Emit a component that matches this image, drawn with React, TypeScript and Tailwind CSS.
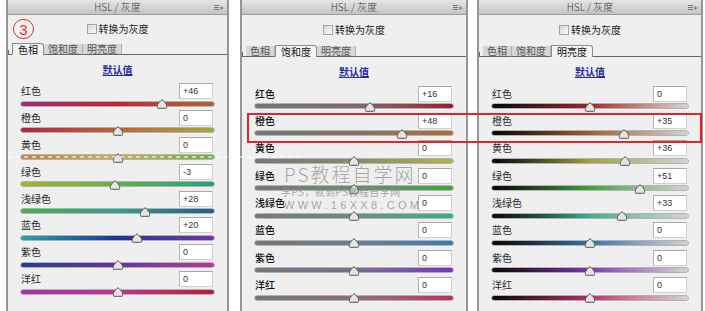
import React from "react";

type Row = { label: string; value: string; pos: number; track: string };

const hueRows: Row[] = [
  { label: "红色", value: "+46", pos: 46, track: "bg-linear-to-r from-[#9c2f78] via-[#c41f34] to-[#a8643c]" },
  { label: "橙色", value: "0", pos: 0, track: "bg-linear-to-r from-[#b21f42] via-[#c0622e] to-[#a4a640]" },
  { label: "黄色", value: "0", pos: 0, track: "bg-linear-to-r from-[#c48444] via-[#c4b252] to-[#6cb040]" },
  { label: "绿色", value: "-3", pos: -3, track: "bg-linear-to-r from-[#a8b230] via-[#5cb240] to-[#1ea084]" },
  { label: "浅绿色", value: "+28", pos: 28, track: "bg-linear-to-r from-[#44b040] via-[#2ea292] to-[#1f5f8a]" },
  { label: "蓝色", value: "+20", pos: 20, track: "bg-linear-to-r from-[#2ea2a2] via-[#1f3494] to-[#7232a6]" },
  { label: "紫色", value: "0", pos: 0, track: "bg-linear-to-r from-[#1f3a9c] via-[#6430b0] to-[#c03290]" },
  { label: "洋红", value: "0", pos: 0, track: "bg-linear-to-r from-[#a032b0] via-[#c03290] to-[#b01f3a]" },
];

const satRows: Row[] = [
  { label: "红色", value: "+16", pos: 16, track: "bg-linear-to-r from-[#767676] via-[#7e6a6c] to-[#9c1030]" },
  { label: "橙色", value: "+48", pos: 48, track: "bg-linear-to-r from-[#767676] via-[#807468] to-[#b06c30]" },
  { label: "黄色", value: "0", pos: 0, track: "bg-linear-to-r from-[#767676] via-[#8a8a6a] to-[#b4b440]" },
  { label: "绿色", value: "0", pos: 0, track: "bg-linear-to-r from-[#767676] via-[#6c8a6c] to-[#3ca63c]" },
  { label: "浅绿色", value: "0", pos: 0, track: "bg-linear-to-r from-[#767676] via-[#6a8c84] to-[#2cb08e]" },
  { label: "蓝色", value: "0", pos: 0, track: "bg-linear-to-r from-[#767676] via-[#6c7c8e] to-[#2e7ec4]" },
  { label: "紫色", value: "0", pos: 0, track: "bg-linear-to-r from-[#767676] via-[#7a6c8e] to-[#7a2ec4]" },
  { label: "洋红", value: "0", pos: 0, track: "bg-linear-to-r from-[#767676] via-[#8a6c7e] to-[#c42266]" },
];

const lumRows: Row[] = [
  { label: "红色", value: "0", pos: 0, track: "bg-linear-to-r from-[#080808] via-[#a6202e] to-[#d2d2d2]" },
  { label: "橙色", value: "+35", pos: 35, track: "bg-linear-to-r from-[#080808] via-[#a2602e] to-[#d2d2d2]" },
  { label: "黄色", value: "+36", pos: 36, track: "bg-linear-to-r from-[#080808] via-[#a4a232] to-[#d2d2d2]" },
  { label: "绿色", value: "+51", pos: 51, track: "bg-linear-to-r from-[#080808] via-[#3ca43c] to-[#d2d2d2]" },
  { label: "浅绿色", value: "+33", pos: 33, track: "bg-linear-to-r from-[#080808] via-[#30b092] to-[#d2d2d2]" },
  { label: "蓝色", value: "0", pos: 0, track: "bg-linear-to-r from-[#080808] via-[#3474b2] to-[#d2d2d2]" },
  { label: "紫色", value: "0", pos: 0, track: "bg-linear-to-r from-[#080808] via-[#8432b4] to-[#d2d2d2]" },
  { label: "洋红", value: "0", pos: 0, track: "bg-linear-to-r from-[#080808] via-[#c42272] to-[#d2d2d2]" },
];

function Thumb({ pos }: { pos: number }) {
  return (
    <svg
      width="11"
      height="10"
      viewBox="0 0 11 10"
      className="absolute top-0 -translate-x-1/2"
      style={{ left: `${50 + pos / 2}%` }}
    >
      <path
        d="M5.5 0.8 C6.2 0.8 10.2 5 10.2 6.4 L10.2 8.5 C10.2 9 9.8 9.3 9.3 9.3 L1.7 9.3 C1.2 9.3 0.8 9 0.8 8.5 L0.8 6.4 C0.8 5 4.8 0.8 5.5 0.8 Z"
        fill="#e4e4e4"
        stroke="#555"
        strokeWidth="1"
      />
    </svg>
  );
}

function TitleBar() {
  return (
    <div className="relative h-[15px] shrink-0 flex items-center justify-center bg-linear-to-b from-[#e6e6e6] to-[#c4c4c4] border-b border-[#9c9c9c] text-[10px] leading-none text-[#3a3a3a] font-light">
      HSL / 灰度
      <svg width="10" height="6" viewBox="0 0 10 6" className="absolute right-[3px] top-[5px]">
        <path d="M0 0.5h5M0 2.5h5M0 4.5h5" stroke="#777" strokeWidth="1" />
        <path d="M6.5 1 L9.5 3 L6.5 5 Z" fill="#777" />
      </svg>
    </div>
  );
}

function Tabs({ active }: { active: number }) {
  const names = ["色相", "饱和度", "明亮度"];
  return (
    <div className="h-[12px] shrink-0 flex items-end">
      <div className="w-[4px] h-[5px] border-b border-l border-[#666]" />
      {names.map((t, i) =>
        i === active ? (
          <div
            key={t}
            className="h-[12px] px-[5px] bg-[#f3f3f3] border-t border-x border-[#8e8e8e] rounded-tr-[3px] text-[10px] leading-[11px] text-[#111]"
          >
            {t}
          </div>
        ) : (
          <div
            key={t}
            className="h-[11px] px-[4px] bg-[#d6d6d6] border-b border-r border-[#666] border-r-[#b0b0b0] text-[10px] leading-[10px] text-[#555]"
          >
            {t}
          </div>
        )
      )}
      <div className="flex-1 border-b border-[#666]" />
    </div>
  );
}

function Panel({
  className,
  rows,
  active,
  rowH,
  checkH,
  linkH,
  bold,
}: {
  className: string;
  rows: Row[];
  active: number;
  rowH: string;
  checkH: string;
  linkH: string;
  bold?: boolean;
}) {
  return (
    <div className={`${className} h-[311px] shrink-0 flex flex-col bg-[#efefef] border-x-2 border-[#969696]`}>
      <TitleBar />
      <div className={`${checkH} shrink-0 flex items-center justify-center gap-[2px]`}>
        <span className="w-[10px] h-[10px] border border-[#a4a4a4] bg-linear-to-br from-[#d8d8d8] to-[#fafafa]" />
        <span className="text-[10px] leading-none text-[#1a1a1a]">转换为灰度</span>
      </div>
      <Tabs active={active} />
      <div className={`${linkH} shrink-0 flex justify-center pt-[10px]`}>
        <span className="text-[10px] leading-none font-bold text-[#2b2b9c] underline underline-offset-1">默认值</span>
      </div>
      {rows.map((r) => (
        <div key={r.label} className={`${rowH} shrink-0 px-[13px]`}>
          <div className="mt-[3px] h-[16px] flex items-center justify-between">
            <span className={`text-[10px] leading-none ${bold ? "font-medium text-[#111]" : "text-[#2a2a2a]"}`}>
              {r.label}
            </span>
            <span className="mr-[1px] w-[34px] h-[16px] bg-white border border-[#cfcfcf] border-t-[#a8a8a8] border-l-[#b4b4b4] pl-[3px] text-[9px] leading-[14px] text-[#333] font-['Liberation_Sans',sans-serif]">
              {r.value}
            </span>
          </div>
          <div className="relative h-[9px] flex items-center">
            <div className={`w-full h-[4px] rounded-full ${r.track} shadow-[0_0_0_0.5px_rgba(40,40,40,0.6)]`} />
            <Thumb pos={r.pos} />
          </div>
        </div>
      ))}
    </div>
  );
}

export default function App() {
  return (
    <div className="relative w-[705px] h-[311px] overflow-hidden bg-white font-['Noto_Sans_CJK_SC',sans-serif]">
      <div className="flex pl-[6px]">
        <Panel className="w-[223px]" rows={hueRows} active={0} rowH="h-[26.9px]" checkH="h-[28px]" linkH="h-[25px]" />
        <Panel className="ml-[11px] w-[228px]" rows={satRows} active={1} rowH="h-[27.4px]" checkH="h-[30px]" linkH="h-[25.5px]" bold />
        <Panel className="ml-[9px] w-[226px]" rows={lumRows} active={2} rowH="h-[27.4px]" checkH="h-[30px]" linkH="h-[25.5px]" />
      </div>

      {/* step marker */}
      <div className="absolute left-[13px] top-[19px] w-[21px] h-[20px] rounded-full border-[1.5px] border-[#d8332c] flex items-center justify-center text-[15px] leading-none text-[#d8332c] font-['Liberation_Sans',sans-serif]">
        3
      </div>

      {/* highlight box */}
      <div className="absolute left-[247px] top-[113px] w-[455px] h-[30px] border-2 border-[#d42a2e]" />

      {/* watermark streak */}
      <div className="absolute left-0 top-[156px] w-[300px] h-[2px] bg-[repeating-linear-gradient(90deg,rgba(255,255,255,0.55)_0_4px,transparent_4px_8px)]" />

      {/* watermark */}
      <div className="absolute left-[284px] top-[162px] flex flex-col text-[#8a8a8a]/75">
        <span className="text-[19px] leading-[23px] tracking-[2px] font-light">PS教程自学网</span>
        <span className="-ml-[3px] text-[10px] leading-[13px] tracking-[0.4px]">学PS，就到PS教程自学网</span>
        <span className="text-[11px] leading-[14px] tracking-[3.3px] font-['Liberation_Sans',sans-serif]">WWW.16XX8.COM</span>
      </div>
    </div>
  );
}
